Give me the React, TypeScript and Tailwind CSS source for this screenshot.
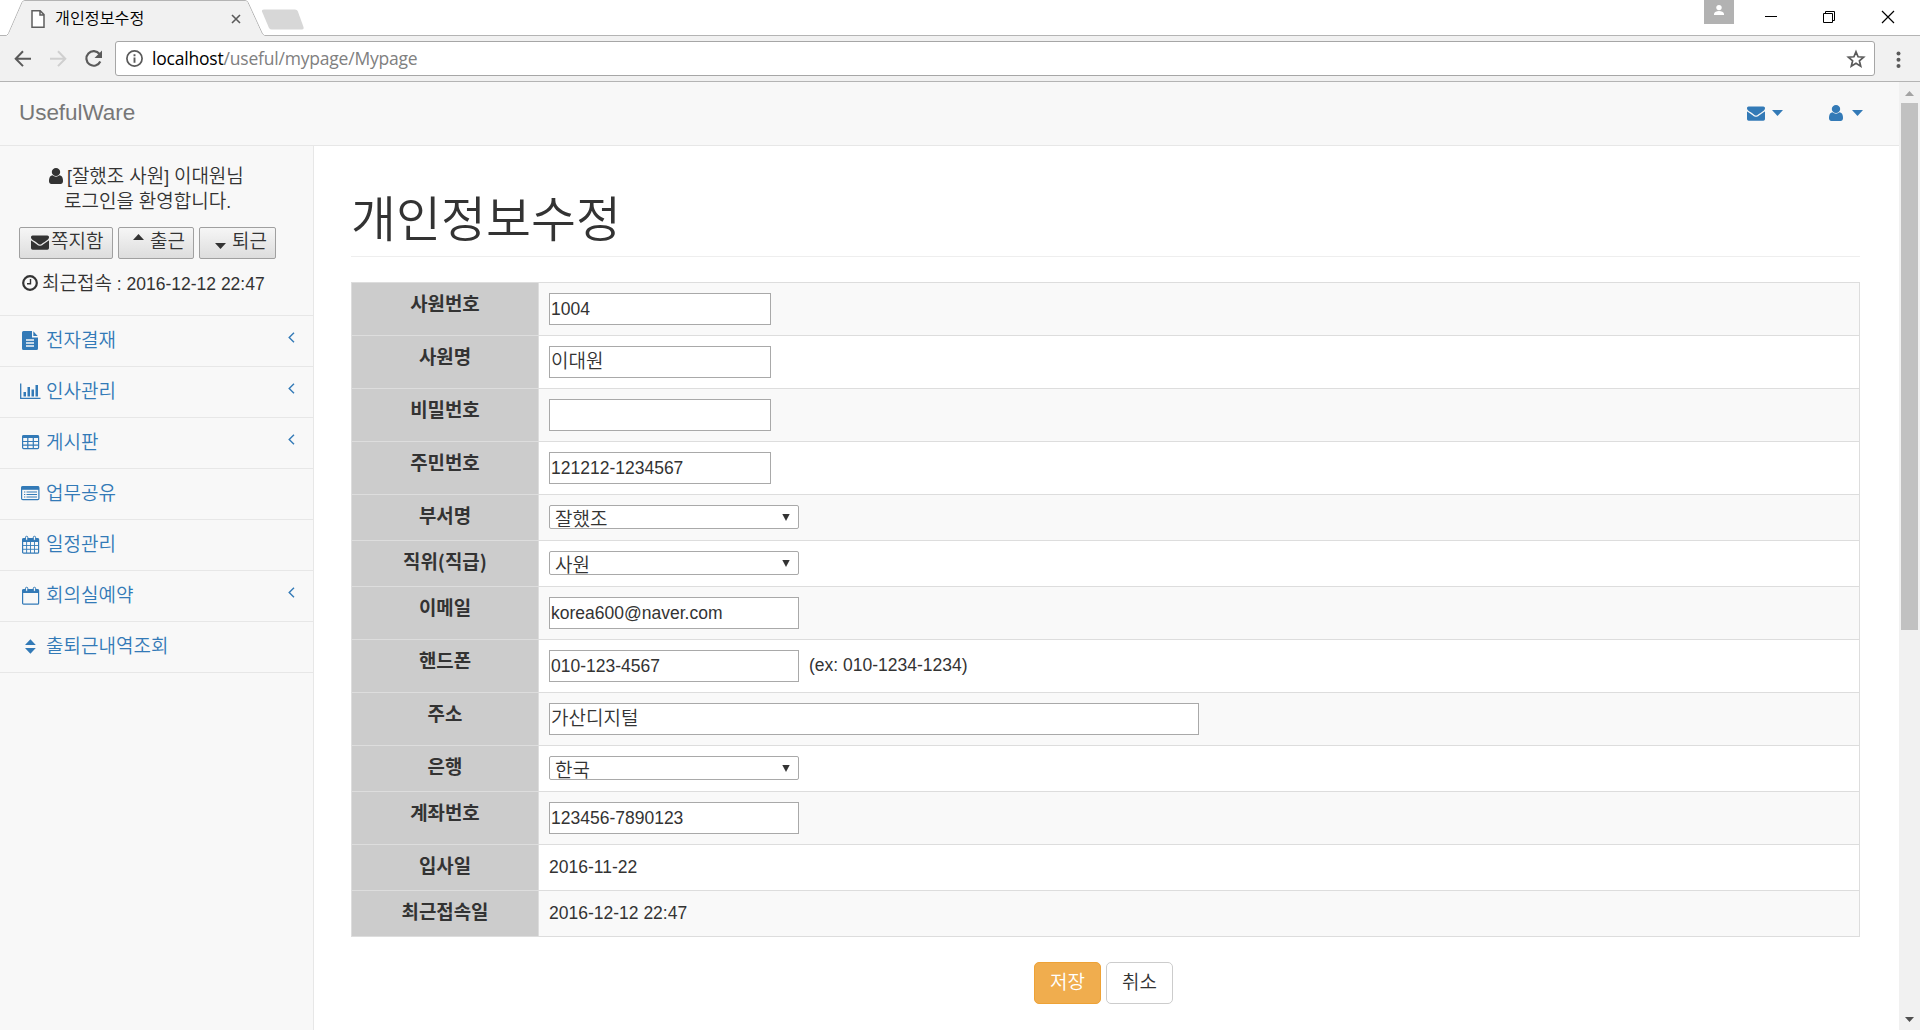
import type { ReactNode } from "react";

const KR = "font-['Noto_Sans_CJK_KR',sans-serif]";

/* Hangul run inside a line of Latin text */
function K({ children, className = "" }: { children: ReactNode; className?: string }) {
  return <span className={`${KR} text-[19px] font-[350] ${className}`}>{children}</span>;
}

function Envelope({ className = "" }: { className?: string }) {
  return (
    <svg viewBox="0 0 1792 1792" className={`size-[18px] shrink-0 ${className}`} fill="currentColor">
      <path d="M1792 710v794q0 66-47 113t-113 47h-1472q-66 0-113-47t-47-113v-794q44 49 101 87 362 246 497 345 57 42 92.5 65.5t94.5 48 110 24.5h2q51 0 110-24.5t94.5-48 92.5-65.5q170-123 498-345 57-39 100-87zm0-294q0 79-49 151t-122 123q-376 261-468 325-10 7-42.5 31t-54 38.5-52 32.5-57.5 27-50 9h-2q-23 0-50-9t-57.5-27-52-32.5-54-38.5-42.5-31q-91-64-262-182.5t-205-142.5q-62-42-117-115.5t-55-136.5q0-78 41.5-130t118.5-52h1472q65 0 112.5 47t47.5 113z" />
    </svg>
  );
}

function User({ className = "" }: { className?: string }) {
  return (
    <svg viewBox="256 128 1280 1536" className={`h-[16px] w-[14px] shrink-0 ${className}`} preserveAspectRatio="none" fill="currentColor">
      <path d="M1536 1399q0 109-62.5 187t-150.5 78h-854q-88 0-150.5-78t-62.5-187q0-85 8.5-160.5t31.5-152 58.5-131 94-89 134.5-34.5q131 128 313 128t313-128q76 0 134.5 34.5t94 89 58.5 131 31.5 152 8.5 160.5zm-256-887q0 159-112.5 271.5t-271.5 112.5-271.5-112.5-112.5-271.5 112.5-271.5 271.5-112.5 271.5 112.5 112.5 271.5z" />
    </svg>
  );
}

function Triangle({ up = false, className = "" }: { up?: boolean; className?: string }) {
  return (
    <svg viewBox="0 0 11 6" className={`h-[6px] w-[11px] shrink-0 ${className}`} fill="currentColor">
      <path d={up ? "M0 6L5.5 0L11 6Z" : "M0 0H11L5.5 6Z"} />
    </svg>
  );
}

function BrowserChrome() {
  return (
    <div className="shrink-0">
      <div className="flex h-[36px] bg-white">
        <div className="relative flex h-[36px] w-[310px] shrink-0">
          <svg viewBox="0 0 310 36" className="absolute inset-0 h-[36px] w-[310px]">
            <path d="M0 35.5H6.5L8.5 33.5L22 2.5Q23 0.5 25 0.5H245Q247 0.5 248 2.5L262.500 34L264.500 35.500H310" fill="none" stroke="#b4b4b4" />
            <path d="M7 36L9 33.500L22.500 2.500Q23.300 1 25 1H245Q246.700 1 247.500 2.500L262 34.500L264 36Z" fill="#f1f1f1" />
            <path d="M264 9.500H295Q297 9.500 297.700 11L303.500 27Q304 29.500 302 29.500H272Q270 29.500 269 28L262 11.500Q261.500 9.500 264 9.500Z" fill="#d7d7d7" />
            <path d="M32 10.800H40.200L44 14.600V27.200H32Z M40 10.800V15H44" fill="#fff" stroke="#5f5f5f" strokeWidth="1.500" />
            <path d="M232 15L240 23M240 15L232 23" stroke="#5a5a5a" strokeWidth="1.600" />
          </svg>
          <span className={`${KR} relative ml-[55px] mt-[5px] text-[16.200px] font-[350] leading-[24px] text-black`}>개인정보수정</span>
        </div>
        <div className="flex-1 border-b border-[#b4b4b4]" />
        <div className="flex h-[36px] w-[216px] border-b border-[#b4b4b4]">
          <svg viewBox="0 0 216 36" className="h-[36px] w-[216px]" fill="none">
            <rect width="30" height="24" fill="#b2b2b2" />
            <circle cx="15" cy="7.600" r="2.700" fill="#fff" />
            <path d="M10 15V13.500Q11 11 15 11T20 13.500V15Z" fill="#fff" />
            <path d="M61 16.500H73" stroke="#000" />
            <path d="M119.500 13.500H128.500V22.500H119.500ZM121.500 13.500V11.500H130.500V20.500H128.500" stroke="#000" />
            <path d="M178 11L190 23M190 11L178 23" stroke="#000" strokeWidth="1.200" />
          </svg>
        </div>
      </div>
      <div className="flex h-[46px] items-start border-b border-[#b4b4b4] bg-[#f1f1f1]">
        <svg viewBox="0 0 115 45" className="h-[45px] w-[115px] shrink-0" fill="none">
          <path d="M31 22.700H16M23 15.300L15.700 22.700L23 30.100" stroke="#5a5a5a" strokeWidth="2" />
          <path d="M50 22.700H65M58 15.300L65.300 22.700L58 30.100" stroke="#cfcfcf" strokeWidth="2" />
          <path d="M99.500 18A7.300 7.300 0 1 0 100.300 25.500" stroke="#5a5a5a" strokeWidth="2.200" />
          <path d="M102 14.500V22H94.500Z" fill="#5a5a5a" />
        </svg>
        <div className="mt-[5px] flex h-[35px] flex-1 items-center rounded-[3px] border border-[#a6a6a6] bg-white">
          <svg viewBox="0 0 20 20" className="ml-[9px] size-[19px] shrink-0" fill="none">
            <circle cx="10" cy="10" r="8" stroke="#5a5a5a" strokeWidth="1.800" />
            <path d="M10 9V14.500M10 5.500V7.500" stroke="#5a5a5a" strokeWidth="2" />
          </svg>
          <span className="relative -top-px ml-[8px] flex-1 font-['Open_Sans',sans-serif] text-[17.500px] leading-[24px] tracking-[-0.200px] text-[#808080]">
            <span className="text-black">localhost</span>/useful/mypage/Mypage
          </span>
          <svg viewBox="0 0 20 20" className="mr-[8px] size-[20px] shrink-0" fill="none">
            <path d="M10 2.800L12.100 7.800L17.600 8.200L13.400 11.800L14.700 17.200L10 14.300L5.300 17.200L6.600 11.800L2.400 8.200L7.900 7.800Z" stroke="#5a5a5a" strokeWidth="1.700" />
          </svg>
        </div>
        <svg viewBox="0 0 45 45" className="h-[45px] w-[45px] shrink-0" fill="#5a5a5a">
          <circle cx="23.500" cy="17.500" r="2" />
          <circle cx="23.500" cy="23.700" r="2" />
          <circle cx="23.500" cy="30" r="2" />
        </svg>
      </div>
    </div>
  );
}

const icons: Record<string, ReactNode> = {
  file: (
    <>
      <path d="M3.500 2H12V8.500H18V19.500Q18 21 16.500 21H3.500Q2 21 2 19.500V3.500Q2 2 3.500 2Z" fill="currentColor" />
      <path d="M13.300 2.300L17.700 7H13.300Z" fill="currentColor" />
      <path d="M6 11H14M6 14H14M6 17H14" stroke="#f8f8f8" strokeWidth="1.300" />
    </>
  ),
  chart: (
    <>
      <path d="M0.700 3.500V18.300H20.500" fill="none" stroke="currentColor" strokeWidth="1.300" />
      <path d="M3.500 12H6V16.500H3.500ZM7.500 7H10V16.500H7.500ZM11.500 9.500H14V16.500H11.500ZM15.500 5H18V16.500H15.500Z" fill="currentColor" />
    </>
  ),
  table: (
    <>
      <rect x="2.600" y="4.600" width="16" height="13" rx="1" fill="none" stroke="currentColor" strokeWidth="1.200" />
      <path d="M2.500 4.500H18.500V7H2.500Z" fill="currentColor" />
      <path d="M2.500 10.500H18.500M2.500 14.100H18.500M7.800 6V17.500M13.300 6V17.500" stroke="currentColor" strokeWidth="1.200" />
    </>
  ),
  list: (
    <>
      <rect x="1.600" y="4.600" width="17.300" height="13" rx="1.200" fill="none" stroke="currentColor" strokeWidth="1.200" />
      <path d="M1.500 4.500H19V7.800H1.500Z" fill="currentColor" />
      <path d="M4 10H5.300M4 12.500H5.300M4 15H5.300M6.500 10H17M6.500 12.500H17M6.500 15H17" stroke="currentColor" strokeWidth="1.200" />
    </>
  ),
  calendar: (
    <>
      <rect x="2.600" y="5.600" width="16" height="14.600" rx="1" fill="none" stroke="currentColor" strokeWidth="1.200" />
      <path d="M2.500 5.500H18.500V9H2.500Z" fill="currentColor" />
      <rect x="5.500" y="3.300" width="2.300" height="4" rx="1" fill="#f8f8f8" stroke="currentColor" />
      <rect x="13.300" y="3.300" width="2.300" height="4" rx="1" fill="#f8f8f8" stroke="currentColor" />
      <path d="M2.500 12.500H18.500M2.500 16.300H18.500M6.600 9V20M10.500 9V20M14.500 9V20" stroke="currentColor" strokeWidth="0.900" />
    </>
  ),
  calendarEmpty: (
    <>
      <rect x="2.600" y="5.600" width="16" height="14.600" rx="1" fill="none" stroke="currentColor" strokeWidth="1.200" />
      <path d="M2.500 5.500H18.500V9H2.500Z" fill="currentColor" />
      <rect x="5.500" y="3.300" width="2.300" height="4" rx="1" fill="#f8f8f8" stroke="currentColor" />
      <rect x="13.300" y="3.300" width="2.300" height="4" rx="1" fill="#f8f8f8" stroke="currentColor" />
    </>
  ),
  sort: <path d="M5 10L10.400 4.300L15.800 10ZM5 13L10.400 18.700L15.800 13Z" fill="currentColor" />,
};

const menu = [
  { icon: "file", label: "전자결재", arrow: true },
  { icon: "chart", label: "인사관리", arrow: true },
  { icon: "table", label: "게시판", arrow: true },
  { icon: "list", label: "업무공유", arrow: false },
  { icon: "calendar", label: "일정관리", arrow: false },
  { icon: "calendarEmpty", label: "회의실예약", arrow: true },
  { icon: "sort", label: "출퇴근내역조회", arrow: false },
];

const grayButton =
  "flex h-[32px] items-start rounded-[2px] border border-[#a0a0a0] bg-linear-to-b from-[#f6f6f6] to-[#dddddd] text-[#333]";

function Sidebar() {
  return (
    <aside className="w-[314px] shrink-0 border-r border-[#e7e7e7] bg-[#f8f8f8]">
      <div className="h-[170px] border-b border-[#e7e7e7] pt-[17px] text-[#333]">
        <div className="flex h-[25px] items-center pl-[49px]">
          <User className="mt-px" />
          <span className="ml-[4px] whitespace-nowrap">
            [<K>잘했조</K> <K>사원</K>] <K>이대원님</K>
          </span>
        </div>
        <div className="flex h-[25px] items-center whitespace-nowrap pl-[64px]">
          <span>
            <K>로그인을</K> <K>환영합니다</K>.
          </span>
        </div>
        <div className="mt-[14px] flex gap-[5px] pl-[19px]">
          <button className={`${grayButton} w-[94px] pl-[11px]`}>
            <Envelope className="mt-[5px]" />
            <K className="ml-[2px] leading-[24px]">쪽지함</K>
          </button>
          <button className={`${grayButton} w-[76px] pl-[14px]`}>
            <Triangle up className="mt-[6px]" />
            <K className="ml-[6px] leading-[24px]">출근</K>
          </button>
          <button className={`${grayButton} w-[77px] pl-[15px]`}>
            <Triangle className="mt-[15px]" />
            <K className="ml-[6px] leading-[24px]">퇴근</K>
          </button>
        </div>
        <div className="mt-[11px] flex h-[26px] items-center pl-[22px]">
          <svg viewBox="0 0 16 16" className="size-[16px]" fill="none" stroke="currentColor">
            <circle cx="8" cy="8" r="6.800" strokeWidth="2.200" />
            <path d="M8.500 4V8.700H5" strokeWidth="1.400" />
          </svg>
          <span className="ml-[4px] whitespace-nowrap">
            <K>최근접속</K> : 2016-12-12 22:47
          </span>
        </div>
      </div>
      {menu.map((m) => (
        <a key={m.label} className="flex h-[51px] items-start border-b border-[#e7e7e7] pl-[20px] text-[#337ab7]">
          <svg viewBox="0 0 22 22" className="mt-[13px] size-[22px] shrink-0">
            {icons[m.icon]}
          </svg>
          <K className="ml-[4px] mt-[10px] flex-1 leading-[26px]">{m.label}</K>
          {m.arrow && (
            <svg viewBox="0 0 7 11" className="mr-[18px] mt-[16px] h-[11px] w-[7px]" fill="none">
              <path d="M6 0.800L1.200 5.500L6 10.200" stroke="currentColor" strokeWidth="1.400" />
            </svg>
          )}
        </a>
      ))}
    </aside>
  );
}

function Field({ width, children }: { width: string; children?: ReactNode }) {
  return (
    <div className={`${width} flex h-[32px] items-center border border-[#a9a9a9] bg-white pl-px`}>
      <span>{children}</span>
    </div>
  );
}

function Select({ children }: { children: ReactNode }) {
  return (
    <div className="flex h-[24px] w-[250px] items-start justify-between rounded-[2px] border border-[#a9a9a9] bg-white pl-[5px] pr-[8px]">
      <K className="leading-[24px]">{children}</K>
      <svg viewBox="0 0 8 7" className="mt-[8px] h-[7px] w-[8px]" fill="#333">
        <path d="M0.300 0H7.700L4 7Z" />
      </svg>
    </div>
  );
}

const short = "w-[222px]";
const medium = "w-[250px]";
const tall = "h-[53px]";
const low = "h-[46px]";

const rows: { label: ReactNode; height: string; body: ReactNode }[] = [
  { label: "사원번호", height: tall, body: <Field width={short}>1004</Field> },
  { label: "사원명", height: tall, body: <Field width={short}><K className="relative -top-px">이대원</K></Field> },
  { label: "비밀번호", height: tall, body: <Field width={short} /> },
  { label: "주민번호", height: tall, body: <Field width={short}>121212-1234567</Field> },
  { label: "부서명", height: low, body: <Select>잘했조</Select> },
  { label: "직위(직급)", height: low, body: <Select>사원</Select> },
  { label: "이메일", height: tall, body: <Field width={medium}>korea600@naver.com</Field> },
  {
    label: "핸드폰",
    height: tall,
    body: (
      <>
        <Field width={medium}>010-123-4567</Field>
        <span className="ml-[10px] leading-[31px]">(ex: 010-1234-1234)</span>
      </>
    ),
  },
  { label: "주소", height: tall, body: <Field width="w-[650px]"><K className="relative -top-px">가산디지털</K></Field> },
  { label: "은행", height: low, body: <Select>한국</Select> },
  { label: "계좌번호", height: tall, body: <Field width={medium}>123456-7890123</Field> },
  { label: "입사일", height: low, body: <span className="leading-[24px]">2016-11-22</span> },
  { label: "최근접속일", height: low, body: <span className="leading-[24px]">2016-12-12 22:47</span> },
];

function Content() {
  return (
    <main className="flex-1 bg-white pl-[37px] pr-[39px] text-[#333]">
      <h1 className={`${KR} h-[111px] border-b border-[#eee] pt-[35px] text-[48.900px] font-[350] leading-[70px]`}>개인정보수정</h1>
      <div className="mt-[25px] border border-b-0 border-[#ddd]">
        {rows.map((r, i) => (
          <div key={i} className={`${r.height} ${i % 2 === 0 ? "bg-[#f9f9f9]" : "bg-white"} flex border-b border-[#ddd]`}>
            <div className={`${KR} w-[187px] shrink-0 border-r border-[#ddd] bg-[#ccc] pt-[7px] text-center text-[18.900px] font-bold leading-[25px]`}>
              {r.label}
            </div>
            <div className="flex items-start pl-[10px] pt-[10px]">{r.body}</div>
          </div>
        ))}
      </div>
      <div className="mt-[25px] flex justify-center gap-[5px] pr-[4px]">
        <button className="h-[42px] w-[67px] rounded-[5px] border border-[#eea236] bg-[#f0ad4e] text-white">
          <K className="relative -top-px">저장</K>
        </button>
        <button className="h-[42px] w-[67px] rounded-[5px] border border-[#ccc] bg-white text-[#333]">
          <K className="relative -top-px">취소</K>
        </button>
      </div>
    </main>
  );
}

export default function App() {
  return (
    <div className="flex h-[1030px] w-[1920px] flex-col overflow-hidden bg-white font-['Liberation_Sans',Arial,sans-serif] text-[17.500px] leading-[25px]">
      <BrowserChrome />
      <div className="flex min-h-0 flex-1">
        <div className="flex min-w-0 flex-1 flex-col">
          <nav className="flex h-[64px] shrink-0 items-center border-b border-[#e7e7e7] bg-[#f8f8f8] pb-[2px] pl-[19px] pr-[36px] text-[#337ab7]">
            <span className="flex-1 text-[22.500px] tracking-[-0.050px] text-[#777]">UsefulWare</span>
            <Envelope />
            <Triangle className="ml-[7px]" />
            <User className="ml-[46px]" />
            <Triangle className="ml-[9px]" />
          </nav>
          <div className="flex flex-1">
            <Sidebar />
            <Content />
          </div>
        </div>
        <div className="flex w-[21px] shrink-0 flex-col items-center bg-[#f1f1f1]">
          <svg viewBox="0 0 9 5" className="mt-[9px] h-[5px] w-[9px]" fill="#a3a3a3">
            <path d="M0 5L4.500 0L9 5Z" />
          </svg>
          <div className="mt-[7px] h-[527px] w-[17px] bg-[#c1c1c1]" />
          <svg viewBox="0 0 9 5" className="mb-[8px] mt-auto h-[5px] w-[9px]" fill="#505050">
            <path d="M0 0H9L4.500 5Z" />
          </svg>
        </div>
      </div>
    </div>
  );
}
